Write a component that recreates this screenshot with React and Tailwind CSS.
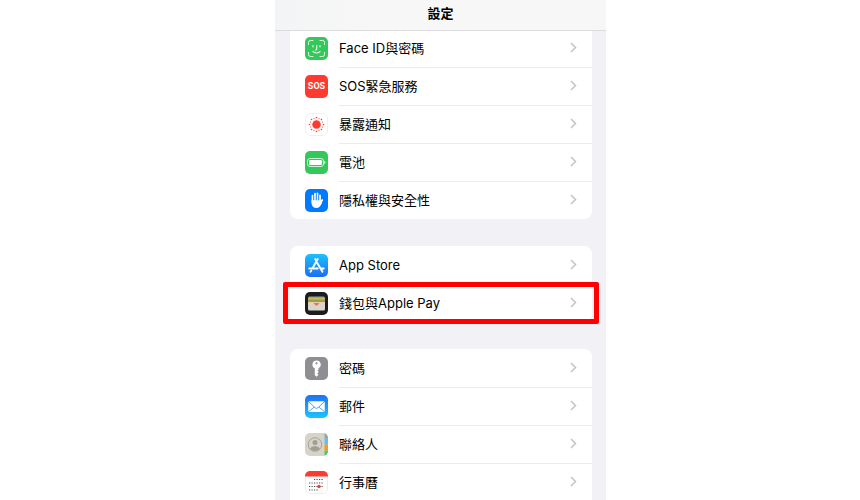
import React from "react";

function Tile({ className = "", children }) {
  return (
    <svg
      viewBox="0 0 46 46"
      aria-hidden="true"
      className={`size-[23px] shrink-0 rounded-[5px] ${className}`}
    >
      {children}
    </svg>
  );
}

function FaceIdIcon() {
  return (
    <Tile className="bg-[#34c759]">
      <g fill="none" stroke="#fff" strokeWidth="2" strokeLinecap="round" strokeOpacity="0.85">
        <path d="M7 15v-4q0-4 4-4h5M30 7h5q4 0 4 4v4M39 31v4q0 4-4 4h-5M16 39h-5q-4 0-4-4v-4" />
        <path d="M16 17v3M30 17v3M23.500 17v7q0 2-2.500 2M16 29q7 6 14 0" strokeWidth="2.400" />
      </g>
    </Tile>
  );
}

function SosIcon() {
  return (
    <span
      aria-hidden="true"
      className="flex size-[23px] shrink-0 items-center justify-center rounded-[5px] bg-[#ff3b30] font-[Roboto,sans-serif] text-[9px] leading-none font-bold text-white"
    >
      SOS
    </span>
  );
}

function ExposureIcon() {
  const rays = Array.from({ length: 16 }, (_, i) => (i * Math.PI) / 8);
  return (
    <Tile className="bg-white">
      <rect x="1" y="1" width="44" height="44" rx="9" fill="none" stroke="#ebebed" strokeWidth="1.500" />
      <circle cx="23" cy="23" r="8.500" fill="#ff3b30" />
      {rays.map((a, i) => (
        <circle
          key={a}
          cx={23 + Math.cos(a) * (i % 2 ? 13 : 14)}
          cy={23 + Math.sin(a) * (i % 2 ? 13 : 14)}
          r={i % 2 ? 1.100 : 1.600}
          fill="#ff3b30"
        />
      ))}
    </Tile>
  );
}

function BatteryIcon() {
  return (
    <Tile className="bg-[#34c759]">
      <rect x="5" y="15" width="32" height="16" rx="5" fill="none" stroke="#fff" strokeOpacity="0.75" strokeWidth="2" />
      <rect x="8" y="18" width="26" height="10" rx="2.500" fill="#fff" />
      <path d="M39 20q3 3 0 6z" fill="#fff" stroke="#fff" strokeOpacity="0.8" />
    </Tile>
  );
}

function HandIcon() {
  return (
    <Tile className="bg-[#007aff]">
      <g stroke="#fff" strokeLinecap="round" strokeWidth="3.600" fill="none">
        <path d="M15 13.500v14M20 9.500v17M25 9v17M30 13v16" />
        <path d="M34.500 22l-5.500 10" strokeWidth="3.400" />
      </g>
      <path d="M13.200 22h18.600v5l2 1q-4 10-10.300 10-10.300 0-10.300-10z" fill="#fff" />
      <path d="M17.500 14v9M22.500 11v12M27.500 13v10" stroke="#007aff" strokeWidth="1" />
    </Tile>
  );
}

function AppStoreIcon() {
  return (
    <Tile>
      <defs>
        <linearGradient id="store" x1="0" y1="0" x2="0" y2="1">
          <stop offset="0" stopColor="#1cc0fb" />
          <stop offset="1" stopColor="#1d6ff2" />
        </linearGradient>
      </defs>
      <rect width="46" height="46" fill="url(#store)" />
      <g fill="none" stroke="#fff" strokeWidth="3.800" strokeLinecap="round">
        <path d="M25.500 10L15 28.500M20.500 10l2.500 4.500M24.500 18l10.500 17.500M8.500 29h17M32.500 29h5M12.500 33.500l-1.500 2" />
      </g>
    </Tile>
  );
}

function WalletIcon() {
  return (
    <Tile className="bg-[#1c1c1e]">
      <path d="M6 14v-2q0-3 3-3h28q3 0 3 3v2z" fill="#7fa9b5" />
      <path d="M6 12h34v4H6z" fill="#d3b55a" />
      <path d="M6 15h34v5H6z" fill="#95a052" />
      <path d="M6 20h34v6H6z" fill="#e3cfa8" />
      <path d="M14 22h18v6H14z" fill="#f36d5e" />
      <path d="M6 22h10q2 0 3 2 1 3 4 3t4-3q1-2 3-2h10v12q0 3-3 3H9q-3 0-3-3z" fill="#d9d5ca" />
    </Tile>
  );
}

function KeyIcon() {
  return (
    <Tile className="bg-[#8e8e93]">
      <path
        fill="#fff"
        fillRule="evenodd"
        d="M23 7a8.200 8.200 0 0 0-3.500 15.600V36l3.500 3.500 4-4-2.500-2.500 3-3-2.500-2.500 2-2v-3A8.200 8.200 0 0 0 23 7zm0 3.500a2.200 2.200 0 1 1 0 4.400 2.200 2.200 0 0 1 0-4.400z"
      />
    </Tile>
  );
}

function MailIcon() {
  return (
    <Tile>
      <defs>
        <linearGradient id="mail" x1="0" y1="0" x2="0" y2="1">
          <stop offset="0" stopColor="#1f72f1" />
          <stop offset="1" stopColor="#1bc5fb" />
        </linearGradient>
      </defs>
      <rect width="46" height="46" fill="url(#mail)" />
      <rect x="6.500" y="12.500" width="33" height="21.500" rx="3" fill="#fff" />
      <path
        d="M7.500 13.500L20 25.500q3 2.500 6 0L38.500 13.500M7.500 33L18.500 24M38.500 33L27.500 24"
        fill="none"
        stroke="#2a93f5"
        strokeWidth="1.600"
      />
    </Tile>
  );
}

function ContactsIcon() {
  return (
    <Tile className="bg-[#d6d3c9]">
      <path d="M39 0h7v10h-7z" fill="#a3a29c" />
      <path d="M39 10h7v13h-7z" fill="#5fc0ee" />
      <path d="M39 23h7v12h-7z" fill="#f79a1e" />
      <path d="M39 35h7v11h-7z" fill="#4ccb5b" />
      <circle cx="20" cy="23" r="13.500" fill="none" stroke="#a19e95" strokeWidth="1.800" />
      <circle cx="20" cy="19" r="5" fill="#a19e95" />
      <path d="M10 31q3-5 10-5t10 5q-4 5-10 5t-10-5z" fill="#a19e95" />
    </Tile>
  );
}

function CalendarIcon() {
  return (
    <Tile className="bg-white">
      <rect x="1" y="1" width="44" height="44" rx="9" fill="none" stroke="#e6e6e8" strokeWidth="1.500" />
      <path d="M0 0h46v11H0z" fill="#ff3b30" />
      <g stroke="#4a4a4c" strokeWidth="2" strokeDasharray="2.400 2.600">
        <path d="M18 17h20M8 24h30M8 31h30M8 38h20" />
      </g>
      <circle cx="28" cy="31" r="3.500" fill="#ff3b30" />
    </Tile>
  );
}

const groups = [
  {
    shape: "rounded-b-lg",
    rows: [
      { label: "Face ID與密碼", Icon: FaceIdIcon },
      { label: "SOS緊急服務", Icon: SosIcon },
      { label: "暴露通知", Icon: ExposureIcon },
      { label: "電池", Icon: BatteryIcon },
      { label: "隱私權與安全性", Icon: HandIcon },
    ],
  },
  {
    shape: "rounded-lg",
    rows: [
      { label: "App Store", Icon: AppStoreIcon },
      { label: "錢包與Apple Pay", Icon: WalletIcon, highlighted: true },
    ],
  },
  {
    shape: "rounded-t-lg",
    rows: [
      { label: "密碼", Icon: KeyIcon },
      { label: "郵件", Icon: MailIcon },
      { label: "聯絡人", Icon: ContactsIcon },
      { label: "行事曆", Icon: CalendarIcon },
    ],
  },
];

function Row({ label, Icon, highlighted, first }) {
  return (
    <li className="relative">
      <a href="#" className="flex h-[38px] items-center gap-[11px] pl-[15px]">
        <Icon />
        <span
          className={`flex h-full flex-1 items-center justify-between border-t pr-[15px] pb-[2px] ${
            first || highlighted ? "border-transparent" : "border-[#ececee]"
          }`}
        >
          <span>{label}</span>
          <svg viewBox="0 0 7 11" aria-hidden="true" className="h-[11px] w-[7px]">
            <path d="M1 1l4.500 4.500L1 10" fill="none" stroke="#c4c4c7" strokeWidth="1.500" />
          </svg>
        </span>
      </a>
      {highlighted && (
        <span
          aria-hidden="true"
          className="pointer-events-none absolute -inset-x-[7px] -inset-y-[2px] rounded-[2px] border-[5px] border-[#ff0000]"
        />
      )}
    </li>
  );
}

export default function App() {
  return (
    <div className="grid h-screen grid-cols-[minmax(0,275fr)_minmax(0,331px)_minmax(0,254fr)] overflow-hidden bg-white font-[Inter,'Noto_Sans_CJK_TC',sans-serif] text-[13px] leading-5 text-black">
      <div className="col-start-2 overflow-hidden bg-[#f2f1f6]">
        <header className="sticky top-0 z-10 flex h-[31px] items-center justify-center border-b border-[#dcdcde] bg-linear-to-r from-[#f3f4f5] to-[#f7f7f7] to-30% pb-1">
          <h1 className="font-bold">設定</h1>
        </header>
        <main className="-mt-[2px] flex flex-col gap-[27px] pr-[14px] pl-[15px]">
          {groups.map(({ shape, rows }) => (
            <ul key={rows[0].label} className={`bg-white ${shape}`}>
              {rows.map((row, i) => (
                <Row key={row.label} {...row} first={i === 0} />
              ))}
            </ul>
          ))}
        </main>
      </div>
    </div>
  );
}
